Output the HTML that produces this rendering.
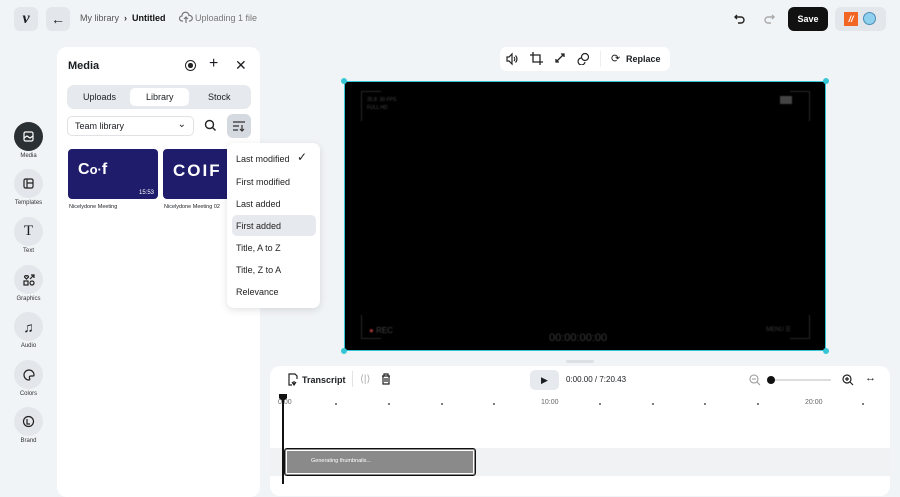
<!DOCTYPE html>
<html><head><style>
*{box-sizing:border-box;margin:0;padding:0}
body{width:900px;height:484px;background:#f1f4f7;font-family:"Liberation Sans",sans-serif;color:#1a1d21;position:relative;overflow:hidden;font-size:9px}
.a{position:absolute}
.circ{position:absolute;left:14px;width:29px;height:29px;border-radius:50%;background:#e3e6ea;display:flex;align-items:center;justify-content:center}
.lbl{position:absolute;width:57px;left:0;text-align:center;font-size:6px;color:#333}
.dm{position:absolute;left:236px;font-size:9px;color:#222}
.tick{position:absolute;top:403px;width:2px;height:2px;background:#555;border-radius:50%}
.v{filter:blur(0.6px)}
</style></head><body>
<!-- top bar -->
<div class="a" style="left:14px;top:7px;width:24px;height:24px;border-radius:6px;background:#e3e6ea;font:bold 16px 'Liberation Serif',serif;text-align:center;line-height:23px;font-style:italic">v</div>
<div class="a" style="left:46px;top:7px;width:24px;height:24px;border-radius:6px;background:#e3e6ea;text-align:center;line-height:24px;font-size:14px">←</div>
<div class="a" style="left:80px;top:13px;font-size:9px;color:#555">My library &nbsp;<b style="color:#333">›</b>&nbsp; <span style="color:#111;font-weight:bold">Untitled</span></div>
<svg class="a" style="left:179px;top:11px" width="14" height="14" viewBox="0 0 14 14" fill="none" stroke="#777" stroke-width="1.2"><path d="M4 10H3a2.5 2.5 0 0 1 0-5 3.5 3.5 0 0 1 7-.5 2.5 2.5 0 0 1 1 5.5h-1M7 12V6M5 8l2-2 2 2"/></svg>
<div class="a" style="left:195px;top:13px;font-size:9px;color:#777">Uploading 1 file</div>
<svg class="a" style="left:733px;top:12px" width="14" height="14" viewBox="0 0 14 14" fill="none" stroke="#222" stroke-width="1.4"><path d="M4 3L2 5l2 2M2 5h6a3 3 0 0 1 0 6H5"/></svg>
<svg class="a" style="left:762px;top:12px" width="14" height="14" viewBox="0 0 14 14" fill="none" stroke="#aaa" stroke-width="1.4"><path d="M10 3l2 2-2 2M12 5H6a3 3 0 0 0 0 6h3"/></svg>
<div class="a" style="left:788px;top:7px;width:40px;height:24px;border-radius:6px;background:#111;color:#fff;font-weight:bold;font-size:9px;text-align:center;line-height:24px">Save</div>
<div class="a" style="left:835px;top:7px;width:51px;height:24px;border-radius:6px;background:#e3e6ea"></div>
<div class="a" style="left:844px;top:12px;width:14px;height:14px;background:#f26522;color:#fff;font-size:9px;font-weight:bold;text-align:center;line-height:14px;font-style:italic">//</div>
<div class="a" style="left:863px;top:12px;width:13px;height:13px;border-radius:50%;background:#8fd0ee;border:1.5px solid #4a8db5"></div>
<!-- sidebar -->
<div class="circ" style="top:122px;background:#2b3035"><svg width="11" height="11" viewBox="0 0 11 11" fill="none" stroke="#fff" stroke-width="1.2"><rect x="1" y="1" width="9" height="9" rx="1.5"/><path d="M1 7l3-2 3 2 3-2"/></svg></div><div class="lbl" style="top:153px">Media</div>
<div class="circ" style="top:169px"><svg width="11" height="11" viewBox="0 0 11 11" fill="none" stroke="#222" stroke-width="1.2"><rect x="1" y="1" width="9" height="9" rx="1.5"/><path d="M4 1v9M4 5h6"/></svg></div><div class="lbl" style="top:200px">Templates</div>
<div class="circ" style="top:217px;font:15px 'Liberation Serif',serif">T</div><div class="lbl" style="top:248px">Text</div>
<div class="circ" style="top:265px"><svg width="12" height="12" viewBox="0 0 12 12" fill="none" stroke="#222" stroke-width="1.2"><path d="M1.5 3a1.2 1.2 0 0 1 2-1 1.2 1.2 0 0 1 2 1L3.5 5zM7 5l4-4M8 1h3v3"/><rect x="1" y="7" width="4" height="4"/><circle cx="9" cy="9" r="2"/></svg></div><div class="lbl" style="top:296px">Graphics</div>
<div class="circ" style="top:312px;font-size:14px">♫</div><div class="lbl" style="top:343px">Audio</div>
<div class="circ" style="top:360px"><svg width="12" height="12" viewBox="0 0 12 12" fill="none" stroke="#222" stroke-width="1.2"><path d="M6 1a5 5 0 0 0 0 10c1 0 1-1 .5-2s0-2 1.5-2h2a1 1 0 0 0 1-1A5 5 0 0 0 6 1z"/></svg></div><div class="lbl" style="top:391px">Colors</div>
<div class="circ" style="top:407px"><svg width="13" height="13" viewBox="0 0 13 13" fill="none" stroke="#222" stroke-width="1.2"><circle cx="6.5" cy="6.5" r="5"/><path d="M5 4v5h3"/></svg></div><div class="lbl" style="top:438px">Brand</div>
<!-- media panel -->
<div class="a" style="left:57px;top:47px;width:203px;height:450px;background:#fff;border-radius:10px"></div>
<div class="a" style="left:68px;top:60px;font-size:11px;font-weight:bold">Media</div>
<div class="a" style="left:185px;top:60px;width:11px;height:11px;border:1.3px solid #222;border-radius:50%"><div style="margin:2px;width:4.5px;height:4.5px;background:#222;border-radius:50%"></div></div>
<div class="a" style="left:209px;top:55px;font-size:16px">+</div>
<div class="a" style="left:235px;top:57px;font-size:14px">✕</div>
<div class="a" style="left:67px;top:85px;width:184px;height:24px;background:#e6e9ed;border-radius:7px"></div>
<div class="a" style="left:130px;top:88px;width:59px;height:18px;background:#fff;border-radius:5px"></div>
<div class="a" style="left:83px;top:92px;font-size:9px">Uploads</div>
<div class="a" style="left:146px;top:92px;font-size:9px">Library</div>
<div class="a" style="left:208px;top:92px;font-size:9px">Stock</div>
<div class="a" style="left:67px;top:116px;width:127px;height:20px;border:1px solid #e0e3e6;border-radius:5px;font-size:9px;padding:4px 7px">Team library<span style="position:absolute;right:7px;top:2px;font-size:10px">⌄</span></div>
<svg class="a" style="left:204px;top:119px" width="13" height="13" viewBox="0 0 13 13" fill="none" stroke="#222" stroke-width="1.4"><circle cx="5.5" cy="5.5" r="4"/><path d="M8.5 8.5l3 3"/></svg>
<div class="a" style="left:227px;top:114px;width:24px;height:24px;background:#d5d9e0;border-radius:6px"></div>
<svg class="a" style="left:232px;top:119px" width="14" height="14" viewBox="0 0 14 14" fill="none" stroke="#333" stroke-width="1.2"><path d="M1 3h12M1 7h6M1 11h5M10 6v6M8 10l2 2 2-2"/></svg>
<div class="a" style="left:68px;top:149px;width:90px;height:50px;background:#1f1c6b;border-radius:4px;color:#fff;font-size:16px;font-weight:bold;padding:12px 10px">C<span style="font-size:13px">o·</span>f<span style="position:absolute;right:4px;bottom:3px;font-size:6px;font-weight:normal">15:53</span></div>
<div class="a" style="left:163px;top:149px;width:70px;height:50px;background:#1f1c6b;border-radius:4px 0 0 4px;color:#fff;font-size:17px;font-weight:bold;padding:12px 10px;letter-spacing:2px">COIF</div>
<div class="a" style="left:69px;top:204px;font-size:5.5px">Nicelydone Meeting</div>
<div class="a" style="left:164px;top:204px;font-size:5.5px">Nicelydone Meeting 02</div>
<!-- dropdown -->
<div class="a" style="left:227px;top:143px;width:93px;height:165px;background:#fff;border-radius:7px;box-shadow:0 2px 8px rgba(0,0,0,.12)"></div>
<div class="a" style="left:232px;top:215px;width:84px;height:21px;background:#e6e9ed;border-radius:5px"></div>
<div class="dm" style="top:154px">Last modified</div><div class="a" style="left:297px;top:150px;font-size:12px">✓</div>
<div class="dm" style="top:177px">First modified</div>
<div class="dm" style="top:199px">Last added</div>
<div class="dm" style="top:221px">First added</div>
<div class="dm" style="top:243px">Title, A to Z</div>
<div class="dm" style="top:265px">Title, Z to A</div>
<div class="dm" style="top:287px">Relevance</div>
<!-- toolbar -->
<div class="a" style="left:500px;top:47px;width:170px;height:24px;background:#fff;border-radius:7px"></div>
<svg class="a" style="left:505px;top:52px" width="14" height="14" viewBox="0 0 14 14" fill="none" stroke="#222" stroke-width="1.2"><path d="M2 5h2l3-3v10L4 9H2z"/><path d="M9 5a3 3 0 0 1 0 4M10.5 3.5a5 5 0 0 1 0 7"/></svg>
<svg class="a" style="left:530px;top:52px" width="13" height="13" viewBox="0 0 13 13" fill="none" stroke="#222" stroke-width="1.3"><path d="M3 0v10h10M0 3h10v10"/></svg>
<svg class="a" style="left:554px;top:52px" width="12" height="12" viewBox="0 0 12 12" fill="none" stroke="#222" stroke-width="1.3"><path d="M2 10l8-8M7 2h3v3M2 7v3h3"/></svg>
<svg class="a" style="left:577px;top:52px" width="13" height="13" viewBox="0 0 13 13" fill="none" stroke="#222" stroke-width="1.2"><circle cx="8" cy="5" r="3.5"/><path d="M4 6a3.5 3.5 0 1 0 4 4"/></svg>
<div class="a" style="left:600px;top:51px;width:1px;height:16px;background:#eee"></div>
<div class="a" style="left:611px;top:52px;font-size:11px">⟳</div>
<div class="a" style="left:626px;top:54px;font-size:9px;font-weight:bold">Replace</div>
<!-- video -->
<div class="a" style="left:344px;top:81px;width:482px;height:270px;background:#000;border:1px solid #35c6d6"></div>
<div class="a" style="left:341px;top:78px;width:6px;height:6px;border-radius:50%;background:#35c6d6"></div>
<div class="a" style="left:823px;top:78px;width:6px;height:6px;border-radius:50%;background:#35c6d6"></div>
<div class="a" style="left:341px;top:348px;width:6px;height:6px;border-radius:50%;background:#35c6d6"></div>
<div class="a" style="left:823px;top:348px;width:6px;height:6px;border-radius:50%;background:#35c6d6"></div>
<div class="a v" style="left:361px;top:91px;width:20px;height:30px;border-left:1.5px solid #2a2a2a;border-top:1.5px solid #2a2a2a"></div>
<div class="a v" style="left:367px;top:96px;font-size:5px;color:#444;line-height:8px">35.8 &nbsp;30 FPS<br>FULL HD</div>
<div class="a v" style="left:790px;top:91px;width:20px;height:30px;border-right:1.5px solid #2a2a2a;border-top:1.5px solid #2a2a2a"></div>
<div class="a v" style="left:780px;top:96px;width:12px;height:8px;background:#444"></div>
<div class="a v" style="left:361px;top:315px;width:20px;height:24px;border-left:1.5px solid #2a2a2a;border-bottom:1.5px solid #2a2a2a"></div>
<div class="a v" style="left:369px;top:326px;font-size:8px;color:#444"><span style="color:#933">●</span> REC</div>
<div class="a v" style="left:549px;top:332px;font-size:11px;color:#3a3a3a">00:00:00:00</div>
<div class="a v" style="left:790px;top:315px;width:20px;height:24px;border-right:1.5px solid #2a2a2a;border-bottom:1.5px solid #2a2a2a"></div>
<div class="a v" style="left:766px;top:326px;font-size:6px;color:#3a3a3a">MENU ☰</div>
<div class="a" style="left:566px;top:360px;width:28px;height:3px;background:#dde0e4;border-radius:2px"></div>
<!-- timeline -->
<div class="a" style="left:270px;top:366px;width:620px;height:130px;background:#fff;border-radius:10px"></div>
<svg class="a" style="left:286px;top:373px" width="13" height="13" viewBox="0 0 13 13" fill="none" stroke="#222" stroke-width="1.2"><path d="M9 1H3v11h3M3 1h6l2 2v3"/><path d="M8 8v4M10 9l-2 3-2-3"/></svg>
<div class="a" style="left:302px;top:375px;font-size:9px;font-weight:bold">Transcript</div>
<div class="a" style="left:352px;top:371px;width:1px;height:16px;background:#e3e3e3"></div>
<div class="a" style="left:360px;top:374px;font-size:10px;color:#aaa">⟨|⟩</div>
<svg class="a" style="left:380px;top:373px" width="12" height="12" viewBox="0 0 12 12" fill="none" stroke="#222" stroke-width="1.2"><path d="M2 3h8M4 3V1h4v2M3 3v8h6V3M5 5v4M7 5v4"/></svg>
<div class="a" style="left:530px;top:370px;width:29px;height:20px;background:#e6e9ed;border-radius:5px;text-align:center;line-height:20px;font-size:9px">▶</div>
<div class="a" style="left:566px;top:375px;font-size:8px">0:00.00 / 7:20.43</div>
<svg class="a" style="left:749px;top:374px" width="12" height="12" viewBox="0 0 12 12" fill="none" stroke="#999" stroke-width="1.1"><circle cx="5" cy="5" r="4"/><path d="M8 8l3 3M3 5h4"/></svg>
<div class="a" style="left:771px;top:379px;width:60px;height:2px;background:#ddd"></div>
<div class="a" style="left:767px;top:376px;width:8px;height:8px;border-radius:50%;background:#111"></div>
<svg class="a" style="left:842px;top:374px" width="12" height="12" viewBox="0 0 12 12" fill="none" stroke="#222" stroke-width="1.2"><circle cx="5" cy="5" r="4"/><path d="M8 8l3 3M3 5h4M5 3v4"/></svg>
<div class="a" style="left:865px;top:372px;font-size:11px">↔</div>
<div class="a" style="left:278px;top:399px;font-size:7px;color:#666">0:00</div>
<div class="a" style="left:541px;top:399px;font-size:7px;color:#666">10:00</div>
<div class="a" style="left:805px;top:399px;font-size:7px;color:#666">20:00</div>
<div class="tick" style="left:335px"></div><div class="tick" style="left:388px"></div><div class="tick" style="left:441px"></div><div class="tick" style="left:493px"></div><div class="tick" style="left:599px"></div><div class="tick" style="left:652px"></div><div class="tick" style="left:704px"></div><div class="tick" style="left:757px"></div><div class="tick" style="left:862px"></div>
<div class="a" style="left:270px;top:448px;width:620px;height:28px;background:#f1f2f3"></div>
<div class="a" style="left:284px;top:448px;width:192px;height:28px;background:#8a8a8a;border:1.5px solid #111;border-radius:3px;outline:1px solid #fff;outline-offset:-3px"></div>
<div class="a" style="left:311px;top:458px;font-size:5.5px;color:#fff">Generating thumbnails...</div>
<div class="a" style="left:282px;top:394px;width:1.5px;height:90px;background:#111"></div>
<div class="a" style="left:279px;top:394px;width:8px;height:7px;background:#111;clip-path:polygon(0 0,100% 0,100% 60%,50% 100%,0 60%)"></div>
</body></html>
